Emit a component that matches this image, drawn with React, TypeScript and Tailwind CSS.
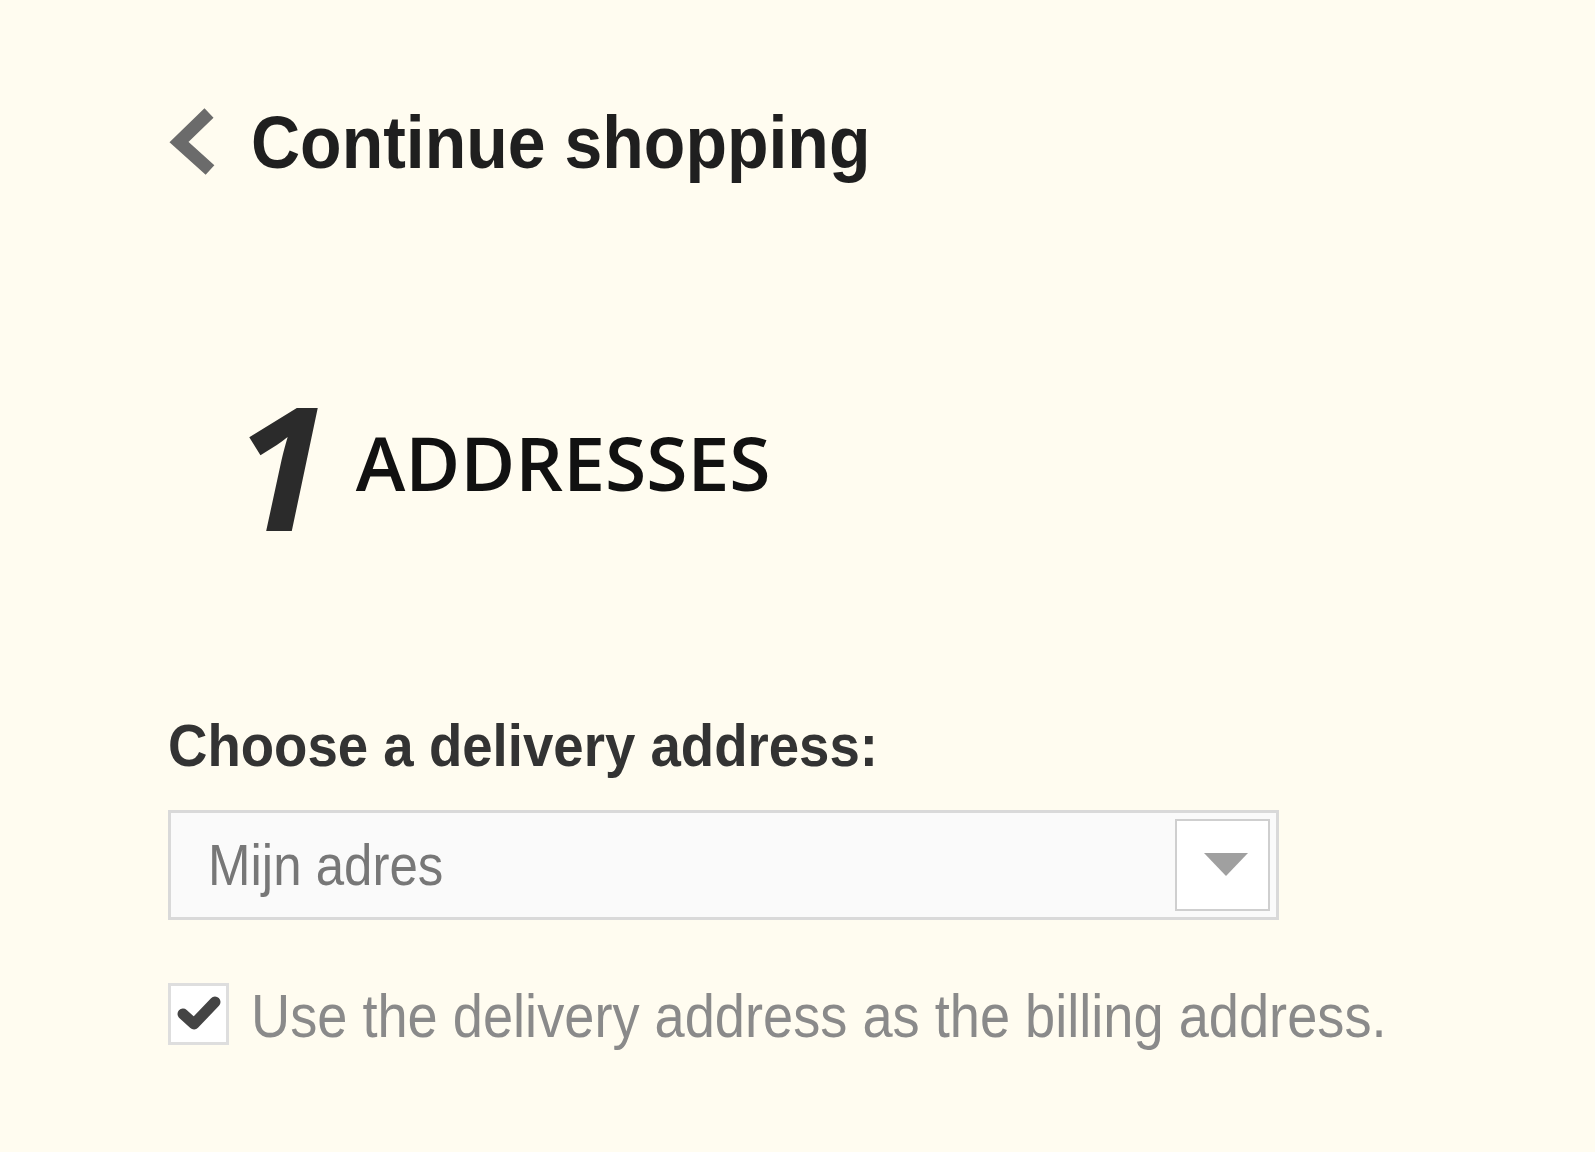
import React from "react";

export default function App() {
  return (
    <div className="min-h-[1152px] w-full bg-[#fffcf0] pl-[168px] pt-[108px] font-['Liberation_Sans',Arial,sans-serif]">
      {/* Continue shopping */}
      <div className="flex h-[68px] items-center">
        <svg width="50" height="68" viewBox="0 0 50 68" className="mt-[-2px] shrink-0">
          <path d="M41 6 L11 35 L42 63" fill="none" stroke="#6b6b6b" strokeWidth="13" strokeLinejoin="miter" />
        </svg>
        <span className="ml-[33px] inline-block scale-y-[1.1] text-[68px] font-bold leading-none text-[#1f1f1f]">
          Continue shopping
        </span>
      </div>

      {/* Step heading */}
      <div className="mt-[202px] flex items-start">
        <span className="ml-[66px] text-[172px] font-bold italic leading-none text-[#2b2b2b] font-['Open_Sans',sans-serif]">
          1
        </span>
        <span className="ml-[27px] mt-[47px] text-[75px] font-semibold leading-none text-[#111111] font-['Open_Sans',sans-serif]">
          ADDRESSES
        </span>
      </div>

      {/* Label */}
      <div className="mt-[169px] h-[54px]">
        <span className="inline-block scale-y-[1.1] text-[54.6px] font-bold leading-none text-[#333333]">
          Choose a delivery address:
        </span>
      </div>

      {/* Select */}
      <div className="mt-[37px] flex h-[110px] w-[1111px] items-center justify-between border-[3px] border-[#d9d9d9] bg-[#fafafa] pl-[37px] pr-[6px]">
        <span className="inline-block scale-y-[1.12] text-[51px] leading-none text-[#777777]">Mijn adres</span>
        <div className="flex h-[92px] w-[95px] items-center justify-center border-2 border-[#cfcfcf] bg-white">
          <svg width="44" height="23" viewBox="0 0 44 23" className="ml-[6px] mt-[-2px]">
            <path d="M0 0 H44 L22 23 Z" fill="#a0a0a0" />
          </svg>
        </div>
      </div>

      {/* Checkbox */}
      <div className="mt-[63px] flex items-center">
        <div className="flex h-[62px] w-[61px] shrink-0 items-center justify-center border-[3px] border-[#dedede] bg-white">
          <svg width="44" height="36" viewBox="0 0 44 36">
            <path d="M6 18 L17 28 L38 6" fill="none" stroke="#444444" strokeWidth="11" strokeLinejoin="round" strokeLinecap="round" />
          </svg>
        </div>
        <span className="ml-[22px] mt-[4px] inline-block scale-y-[1.12] text-[54.2px] leading-none text-[#8a8a8a]">
          Use the delivery address as the billing address.
        </span>
      </div>
    </div>
  );
}
